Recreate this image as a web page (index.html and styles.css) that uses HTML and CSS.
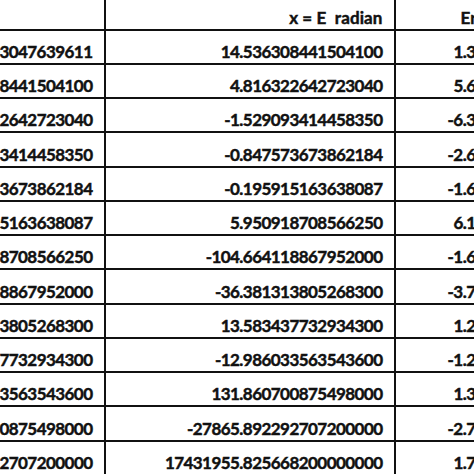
FILE: index.html
```html
<!DOCTYPE html>
<html>
<head>
<meta charset="utf-8">
<link rel="stylesheet" href="styles.css">
</head>
<body>
<div class="sheet">
  <div class="cell head"></div>
  <div class="cell head">x = E&nbsp;&nbsp;radian</div>
  <div class="cell head last">Error</div>

  <div class="cell">15.203047639611</div>
  <div class="cell">14.536308441504100</div>
  <div class="cell last">1.3452871E+01</div>

  <div class="cell">14.536308441504100</div>
  <div class="cell">4.816322642723040</div>
  <div class="cell last">5.6375512E+00</div>

  <div class="cell">4.816322642723040</div>
  <div class="cell">-1.529093414458350</div>
  <div class="cell last">-6.3454161E+00</div>

  <div class="cell">-1.529093414458350</div>
  <div class="cell">-0.847573673862184</div>
  <div class="cell last">-2.6815197E+00</div>

  <div class="cell">-0.847573673862184</div>
  <div class="cell">-0.195915163638087</div>
  <div class="cell last">-1.6516585E+00</div>

  <div class="cell">-0.195915163638087</div>
  <div class="cell">5.950918708566250</div>
  <div class="cell last">6.1468339E+00</div>

  <div class="cell">5.950918708566250</div>
  <div class="cell">-104.664118867952000</div>
  <div class="cell last">-1.6061503E+02</div>

  <div class="cell">-104.664118867952000</div>
  <div class="cell">-36.381313805268300</div>
  <div class="cell last">-3.7282805E+01</div>

  <div class="cell">-36.381313805268300</div>
  <div class="cell">13.583437732934300</div>
  <div class="cell last">1.2996475E+01</div>

  <div class="cell">13.583437732934300</div>
  <div class="cell">-12.986033563543600</div>
  <div class="cell last">-1.2656947E+01</div>

  <div class="cell">-12.986033563543600</div>
  <div class="cell">131.860700875498000</div>
  <div class="cell last">1.3484673E+02</div>

  <div class="cell">131.860700875498000</div>
  <div class="cell">-27865.892292707200000</div>
  <div class="cell last">-2.7997753E+04</div>

  <div class="cell">-27865.892292707200000</div>
  <div class="cell">17431955.825668200000000</div>
  <div class="cell last">1.7459822E+07</div>
</div>
</body>
</html>
```
FILE: styles.css
```css
html, body {
  margin: 0;
  padding: 0;
  background: #ffffff;
  overflow: hidden;
}

.sheet {
  display: grid;
  grid-template-columns: 105.5px 290px 184px;
  grid-template-rows: 30.5px repeat(13, 34.27px);
  font-family: "Lato", "Liberation Sans", sans-serif;
  font-weight: 700;
  font-size: 17px;
  letter-spacing: -0.55px;
  line-height: 1;
  color: #111111;
  -webkit-text-stroke: 0.45px #111111;
}

.cell {
  box-sizing: border-box;
  display: flex;
  align-items: flex-end;
  justify-content: flex-end;
  white-space: nowrap;
  overflow: hidden;
  padding: 0 11px 3px 0;
  border-right: 2px solid #111111;
  border-bottom: 2px solid #111111;
}

.cell.head {
  letter-spacing: 0.1px;
}

.cell.last {
  border-right: none;
}

.cell.head.last {
  justify-content: flex-start;
  padding-left: 65px;
}
```
